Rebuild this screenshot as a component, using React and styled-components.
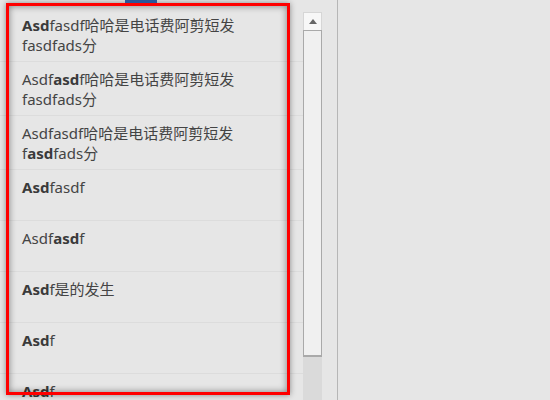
import styled, { createGlobalStyle } from 'styled-components';

const GlobalStyle = createGlobalStyle`
  html, body {
    margin: 0;
    padding: 0;
    background: #e6e6e6;
  }
  * {
    box-sizing: border-box;
  }
`;

const Page = styled.div`
  display: flex;
  width: 550px;
  height: 400px;
  overflow: hidden;
  background: #e6e6e6;
  font-family: "Noto Sans", "Noto Sans CJK SC", sans-serif;
`;

const ListPane = styled.div`
  position: relative;
  width: 303px;
  height: 100%;
  padding-top: 8px;
  overflow: hidden;
`;

const TabMark = styled.div`
  position: absolute;
  top: 0;
  left: 125px;
  width: 32px;
  height: 3px;
  background: #2b579a;
  z-index: 3;
`;

const Highlight = styled.div`
  position: absolute;
  top: 3px;
  left: 6px;
  width: 284px;
  height: 392px;
  border: 3px solid #ff0000;
  box-shadow: 0 0 6px rgba(0, 0, 0, 0.4), inset 0 0 7px rgba(0, 0, 0, 0.45);
  pointer-events: none;
  z-index: 2;
`;

const Row = styled.div`
  min-height: 51px;
  padding: 7px 22px 6px;
  border-bottom: 1px solid #dcdcdc;
  font-size: 15px;
  line-height: 20px;
  color: #444;

  b {
    font-weight: 700;
    color: #3a3a3a;
  }
`;

const ScrollColumn = styled.div`
  display: flex;
  flex-direction: column;
  width: 19px;
  margin-top: 12px;
`;

const UpButton = styled.div`
  display: flex;
  align-items: center;
  justify-content: center;
  height: 18px;
  background: #f7f7f7;
  border: 1px solid #d6d6d6;
  border-bottom: none;
`;

const Thumb = styled.div`
  height: 327px;
  background: #f0f0f0;
  border: 1px solid #a9a9a9;
  border-bottom-width: 2px;
`;

const Track = styled.div`
  flex: 1;
  background: #dadada;
`;

const Gap = styled.div`
  width: 15px;
`;

const Divider = styled.div`
  width: 1px;
  background: #b6b6b6;
`;

const Rest = styled.div`
  flex: 1;
`;

const rows = [
  [<b key="a">Asd</b>, 'fasdf哈哈是电话费阿剪短发fasdfads分'],
  ['Asdf', <b key="a">asd</b>, 'f哈哈是电话费阿剪短发fasdfads分'],
  ['Asdfasdf哈哈是电话费阿剪短发f', <b key="a">asd</b>, 'fads分'],
  [<b key="a">Asd</b>, 'fasdf'],
  ['Asdf', <b key="a">asd</b>, 'f'],
  [<b key="a">Asd</b>, 'f是的发生'],
  [<b key="a">Asd</b>, 'f'],
  [<b key="a">Asd</b>, 'f'],
];

export default function App() {
  return (
    <>
      <GlobalStyle />
      <Page>
        <ListPane>
          <TabMark />
          {rows.map((parts, i) => (
            <Row key={i}>{parts}</Row>
          ))}
          <Highlight />
        </ListPane>
        <ScrollColumn>
          <UpButton>
            <svg width="8" height="5" viewBox="0 0 8 5">
              <path d="M4 0 L8 5 L0 5 Z" fill="#666" />
            </svg>
          </UpButton>
          <Thumb />
          <Track />
        </ScrollColumn>
        <Gap />
        <Divider />
        <Rest />
      </Page>
    </>
  );
}
